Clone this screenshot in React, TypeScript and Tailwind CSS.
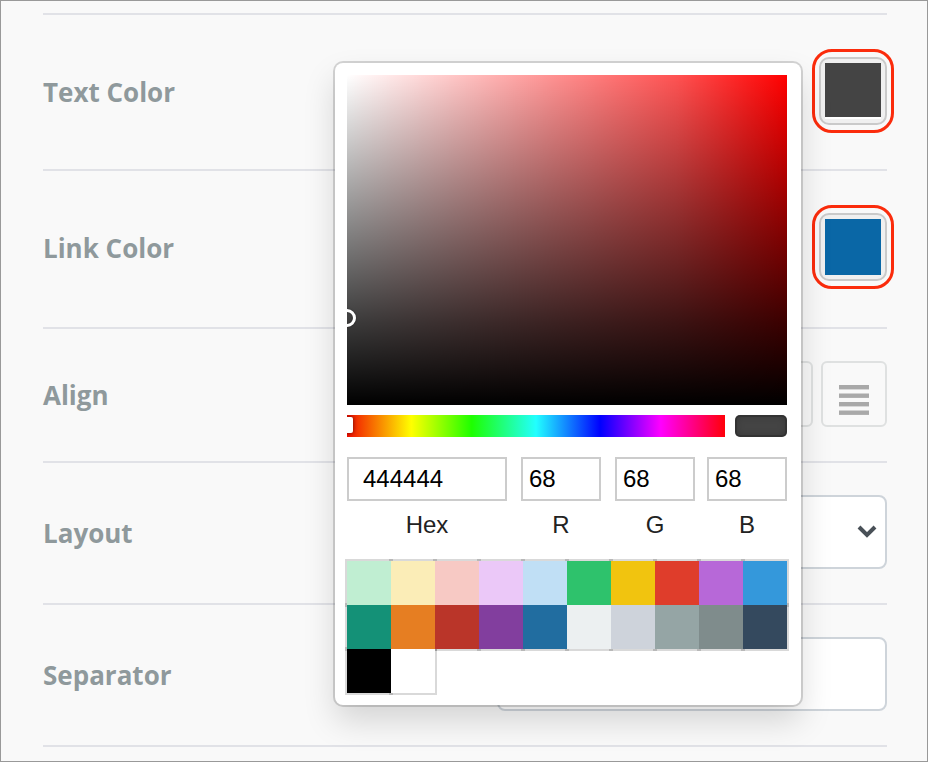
import React from 'react';

type Channel = {
  id: string;
  label: string;
  value: number;
  className: string;
};

const channels: Channel[] = [
  { id: 'red', label: 'R', value: 68, className: 'w-[94px] pl-[14px]' },
  { id: 'green', label: 'G', value: 68, className: 'w-[94px] pl-[14px]' },
  { id: 'blue', label: 'B', value: 68, className: 'w-[92px] pl-3' },
];

const presets: string[] = [
  '#c0eed2', '#fbedb7', '#f7c9c4', '#ebc8f8', '#c0dff5',
  '#2ec26c', '#f1c40f', '#df3d2b', '#b768d8', '#3498db',
  '#149177', '#e67e22', '#ba3529', '#823e9e', '#216da0',
  '#ecf0f1', '#ced3db', '#95a5a5', '#7f8c8c', '#34495e',
  '#000000', '#ffffff',
];

// [x, width] of each stroke
const alignments = [
  { name: 'Left', lines: [[0, 30], [0, 20], [0, 30], [0, 20]] },
  { name: 'Center', lines: [[0, 30], [5, 20], [0, 30], [5, 20]] },
  { name: 'Right', lines: [[0, 30], [10, 20], [0, 30], [10, 20]] },
  { name: 'Justify', lines: [[0, 30], [0, 30], [0, 30], [0, 30]] },
];

type RowProps = {
  label: string;
  htmlFor?: string;
  className?: string;
  children: React.ReactNode;
};

const Row: React.FC<RowProps> = ({ label, htmlFor, className = 'pt-8 pb-[34px]', children }) => (
  <div className={`flex items-center justify-between border-b-2 border-[#e1e2e7] ${className}`}>
    {htmlFor ? (
      <label htmlFor={htmlFor} className="pt-[2px] text-[26px] leading-9 font-bold text-[#8f999c]">
        {label}
      </label>
    ) : (
      <span className="pt-[2px] text-[26px] leading-9 font-bold text-[#8f999c]">{label}</span>
    )}
    {children}
  </div>
);

const ColorButton: React.FC<{ id: string; color: string; className?: string }> = ({
  id,
  color,
  className = '',
}) => (
  <div className="relative">
    <button
      id={id}
      type="button"
      className="block size-[68px] rounded-[10px] border-2 border-[#cacaca] bg-[#f0f0f0] p-1"
    >
      <span className={`block size-full ${className}`} style={{ backgroundColor: color }} />
    </button>
    <span className="pointer-events-none absolute -inset-x-[7px] -inset-y-2 rounded-[20px] border-3 border-[#fb2c0c]" />
  </div>
);

const ColorPicker: React.FC = () => (
  <div className="absolute top-[62px] right-[126px] w-[466px] rounded-lg bg-white pt-3 pr-[14px] pb-3 pl-3 font-['Liberation_Sans',Arial,sans-serif] shadow-[0_0_0_2px_rgba(0,0,0,0.15),0_16px_32px_rgba(0,0,0,0.15)]">
    <div className="relative h-[330px] overflow-hidden bg-[#ff0000]">
      <div className="absolute inset-0 bg-[linear-gradient(to_right,#fff,rgba(255,255,255,0.54)_50%,rgba(255,255,255,0.32)_75%,rgba(255,255,255,0))]" />
      <div className="absolute inset-0 bg-[linear-gradient(to_top,#000,rgba(0,0,0,0.77)_25%,rgba(0,0,0,0))]" />
      <div
        className="absolute size-[18px] -translate-1/2 rounded-full border-3 border-white shadow-[0_0_2px_rgba(0,0,0,0.4),inset_0_0_2px_rgba(0,0,0,0.4)]"
        style={{ left: '0%', top: '73.6%' }}
      />
    </div>

    <div className="mt-[10px] flex gap-[10px]">
      <div className="relative h-[22px] flex-1 overflow-hidden bg-[linear-gradient(to_right,#f20d00_0%,#ff0_17%,#1eff00_33%,#22ffff_50%,#00f_67%,#f0f_83%,#ff0008_100%)]">
        <div className="absolute top-[2px] -left-[2px] h-4 w-2 rounded-xs bg-white shadow-[0_0_4px_rgba(0,0,0,0.6)]" />
      </div>
      <div className="h-[22px] w-[52px] rounded-[5px] bg-[#444] shadow-[inset_0_0_0_2px_rgba(0,0,0,0.15),inset_0_0_8px_rgba(0,0,0,0.25)]" />
    </div>

    <div className="mt-5 flex">
      <div className="w-40">
        <input
          id="hex"
          type="text"
          defaultValue="444444"
          className="block h-11 w-full border-2 border-[#ccc] px-[14px] text-2xl text-black"
        />
        <label htmlFor="hex" className="block pt-[10px] text-center text-[24px] leading-7 text-[#222]">
          Hex
        </label>
      </div>
      {channels.map((channel) => (
        <div key={channel.id} className={channel.className}>
          <input
            id={channel.id}
            type="text"
            defaultValue={channel.value}
            className="block h-11 w-full border-2 border-[#ccc] px-[6px] text-2xl text-black"
          />
          <label
            htmlFor={channel.id}
            className="block pt-[10px] text-center text-[24px] leading-7 text-[#222]"
          >
            {channel.label}
          </label>
        </div>
      ))}
    </div>

    <div className="mt-[22px] flex flex-wrap">
      {presets.map((color) => (
        <div key={color} className="size-11 shadow-[0_0_0_2px_rgba(0,0,0,0.15)]">
          <button
            type="button"
            aria-label={color}
            className="relative z-10 block size-full"
            style={{ backgroundColor: color }}
          />
        </div>
      ))}
    </div>
  </div>
);

const App: React.FC = () => {
  return (
    <main className="relative mr-px border border-[#999] bg-[#f9f9f9] pt-3 pr-10 pb-[14px] pl-[42px] font-['Open_Sans',sans-serif]">
      <div className="border-t-2 border-[#e1e2e7]">
        <Row label="Text Color" htmlFor="text-color" className="pt-[42px] pb-11">
          <ColorButton id="text-color" color="#444444" className="border-b-2 border-white" />
        </Row>

        <Row label="Link Color" htmlFor="link-color" className="pt-[42px] pb-[46px]">
          <ColorButton id="link-color" color="#0a67a6" />
        </Row>

        <Row label="Align">
          <div className="flex gap-2">
            {alignments.map((alignment) => (
              <button
                key={alignment.name}
                type="button"
                aria-label={alignment.name}
                className="flex size-[66px] items-center justify-center rounded-md border-2 border-[#dfe1e1] pt-3"
              >
                <svg width="30" height="30" viewBox="0 0 30 30" fill="#a9a9a9">
                  {alignment.lines.map(([x, width], i) => (
                    <rect key={i} x={x} y={i * 8.5} width={width} height="4.4" />
                  ))}
                </svg>
              </button>
            ))}
          </div>
        </Row>

        <Row label="Layout" htmlFor="layout">
          <div className="relative w-[390px]">
            <select
              id="layout"
              className="block h-[74px] w-full appearance-none rounded-lg border-2 border-[#ced4da] bg-white px-4"
            >
              <option value="" />
            </select>
            <svg
              className="pointer-events-none absolute top-[29px] right-[10px]"
              width="20"
              height="16"
              viewBox="0 0 20 16"
              fill="none"
              stroke="#495057"
              strokeWidth="4"
            >
              <path d="M2 3l8 8 8-8" />
            </svg>
          </div>
        </Row>

        <Row label="Separator" htmlFor="separator">
          <input
            id="separator"
            type="text"
            className="block h-[74px] w-[390px] rounded-lg border-2 border-[#ced4da] bg-white px-4"
          />
        </Row>
      </div>

      <ColorPicker />
    </main>
  );
};

export default App;
